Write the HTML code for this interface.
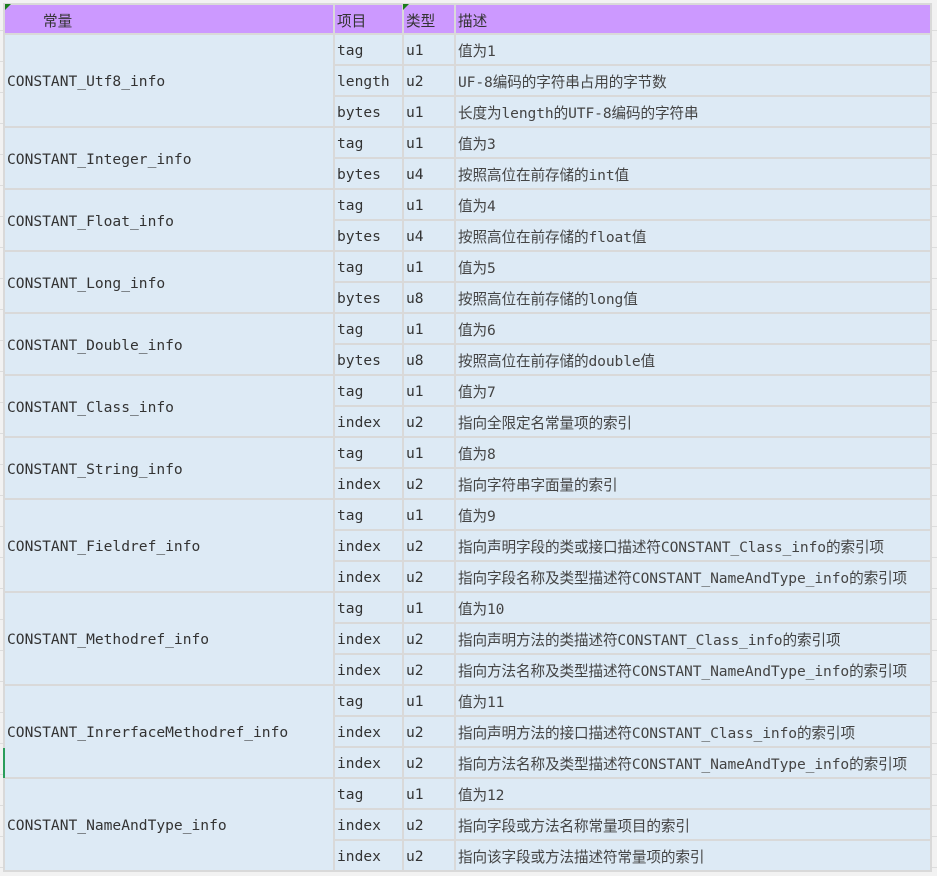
<!DOCTYPE html>
<html><head><meta charset="utf-8"><style>
html,body{margin:0;padding:0;background:#f2f2f2;width:937px;height:876px;overflow:hidden}
table{position:absolute;left:3px;top:3px;border-collapse:separate;border-spacing:2px;background:#d9d9d9;table-layout:fixed}
td{background:#ddeaf5;height:29px;padding:2px 0 0 2px;font:14.6px "DejaVu Sans Mono","Liberation Mono","Noto Sans CJK SC",monospace;color:#333;white-space:nowrap;overflow:hidden;vertical-align:middle;box-sizing:border-box}
tr.h td{background:#cc99ff;height:28px;font-family:"DejaVu Sans Mono","Noto Sans CJK SC",monospace}
td.d{color:#444;font-family:"DejaVu Sans Mono","Noto Sans CJK SC",monospace;letter-spacing:-0.1px}
.tri{position:absolute;width:0;height:0;border-top:6px solid #1a7d1a;border-right:6px solid transparent}
</style></head><body>
<div style="position:absolute;left:0;top:0;width:937px;height:876px;background:repeating-linear-gradient(#f2f2f2 0 30px,#ddd 30px 31px)"></div>
<table>
<colgroup><col style="width:328px"><col style="width:67px"><col style="width:50px"><col style="width:474px"></colgroup>
<tr class="h"><td style="padding-left:38px">常量</td><td>项目</td><td>类型</td><td>描述</td></tr>
<tr><td rowspan="3">CONSTANT_Utf8_info</td><td>tag</td><td>u1</td><td class="d">值为1</td></tr>
<tr><td>length</td><td>u2</td><td class="d">UF-8编码的字符串占用的字节数</td></tr>
<tr><td>bytes</td><td>u1</td><td class="d">长度为length的UTF-8编码的字符串</td></tr>
<tr><td rowspan="2">CONSTANT_Integer_info</td><td>tag</td><td>u1</td><td class="d">值为3</td></tr>
<tr><td>bytes</td><td>u4</td><td class="d">按照高位在前存储的int值</td></tr>
<tr><td rowspan="2">CONSTANT_Float_info</td><td>tag</td><td>u1</td><td class="d">值为4</td></tr>
<tr><td>bytes</td><td>u4</td><td class="d">按照高位在前存储的float值</td></tr>
<tr><td rowspan="2">CONSTANT_Long_info</td><td>tag</td><td>u1</td><td class="d">值为5</td></tr>
<tr><td>bytes</td><td>u8</td><td class="d">按照高位在前存储的long值</td></tr>
<tr><td rowspan="2">CONSTANT_Double_info</td><td>tag</td><td>u1</td><td class="d">值为6</td></tr>
<tr><td>bytes</td><td>u8</td><td class="d">按照高位在前存储的double值</td></tr>
<tr><td rowspan="2">CONSTANT_Class_info</td><td>tag</td><td>u1</td><td class="d">值为7</td></tr>
<tr><td>index</td><td>u2</td><td class="d">指向全限定名常量项的索引</td></tr>
<tr><td rowspan="2">CONSTANT_String_info</td><td>tag</td><td>u1</td><td class="d">值为8</td></tr>
<tr><td>index</td><td>u2</td><td class="d">指向字符串字面量的索引</td></tr>
<tr><td rowspan="3">CONSTANT_Fieldref_info</td><td>tag</td><td>u1</td><td class="d">值为9</td></tr>
<tr><td>index</td><td>u2</td><td class="d">指向声明字段的类或接口描述符CONSTANT_Class_info的索引项</td></tr>
<tr><td>index</td><td>u2</td><td class="d">指向字段名称及类型描述符CONSTANT_NameAndType_info的索引项</td></tr>
<tr><td rowspan="3">CONSTANT_Methodref_info</td><td>tag</td><td>u1</td><td class="d">值为10</td></tr>
<tr><td>index</td><td>u2</td><td class="d">指向声明方法的类描述符CONSTANT_Class_info的索引项</td></tr>
<tr><td>index</td><td>u2</td><td class="d">指向方法名称及类型描述符CONSTANT_NameAndType_info的索引项</td></tr>
<tr><td rowspan="3">CONSTANT_InrerfaceMethodref_info</td><td>tag</td><td>u1</td><td class="d">值为11</td></tr>
<tr><td>index</td><td>u2</td><td class="d">指向声明方法的接口描述符CONSTANT_Class_info的索引项</td></tr>
<tr><td>index</td><td>u2</td><td class="d">指向方法名称及类型描述符CONSTANT_NameAndType_info的索引项</td></tr>
<tr><td rowspan="3">CONSTANT_NameAndType_info</td><td>tag</td><td>u1</td><td class="d">值为12</td></tr>
<tr><td>index</td><td>u2</td><td class="d">指向字段或方法名称常量项目的索引</td></tr>
<tr><td>index</td><td>u2</td><td class="d">指向该字段或方法描述符常量项的索引</td></tr>
</table>
<div class="tri" style="left:5px;top:4px"></div>
<div class="tri" style="left:403px;top:4px"></div>
<div style="position:absolute;left:3px;top:748px;width:2px;height:30px;background:#2a9d5a"></div>
</body></html>
